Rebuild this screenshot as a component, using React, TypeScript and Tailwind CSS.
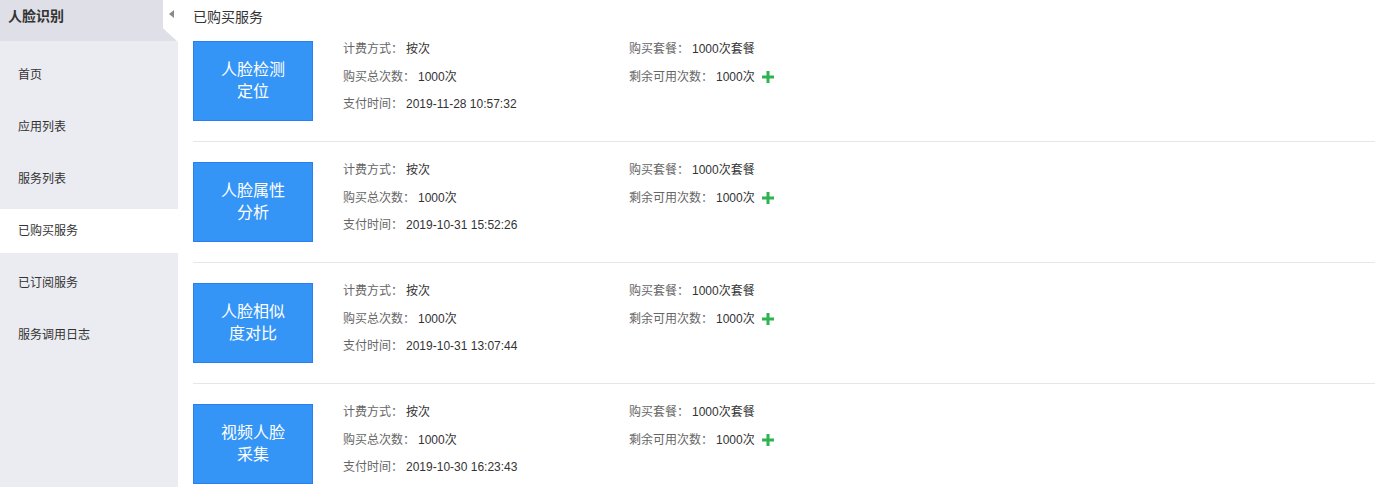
import React from "react";

type Item = {
  name: [string, string];
  time: string;
};

const items: Item[] = [
  { name: ["人脸检测", "定位"], time: "2019-11-28 10:57:32" },
  { name: ["人脸属性", "分析"], time: "2019-10-31 15:52:26" },
  { name: ["人脸相似", "度对比"], time: "2019-10-31 13:07:44" },
  { name: ["视频人脸", "采集"], time: "2019-10-30 16:23:43" },
];

const nav = ["首页", "应用列表", "服务列表", "已购买服务", "已订阅服务", "服务调用日志"];

function Plus() {
  return (
    <svg width="12" height="12" viewBox="0 0 12 12" className="ml-[7px]">
      <rect x="4.5" y="0" width="3" height="12" fill="#2fb350" />
      <rect x="0" y="4.5" width="12" height="3" fill="#2fb350" />
    </svg>
  );
}

function Row({ label, value, plus }: { label: string; value: string; plus?: boolean }) {
  return (
    <div className="flex items-center h-[14px] leading-[14px] text-[12px]">
      <span className="text-[#666]">{label}</span>
      <span className="text-[#333] ml-[3px]">{value}</span>
      {plus && <Plus />}
    </div>
  );
}

export default function App() {
  return (
    <div
      className="flex h-[487px] w-full overflow-hidden bg-white"
      style={{ fontFamily: '"Liberation Sans", "Noto Sans CJK SC", sans-serif' }}
    >
      <aside className="w-[178px] shrink-0 bg-[#ebecf1] flex flex-col">
        <div className="relative h-[41px] bg-[#dfe0e7] pl-[8px] pt-[8px] text-[14px] leading-[16px] font-bold text-[#333]">
          人脸识别
          <div className="absolute right-0 top-0 w-[15px] h-[42px] bg-white [clip-path:polygon(0_0,100%_0,100%_100%,0_67%)]">
            <div className="absolute left-[6px] top-[10px] w-0 h-0 border-t-[4px] border-b-[4px] border-r-[5px] border-t-transparent border-b-transparent border-r-[#8a8a8a]" />
          </div>
        </div>
        <nav className="flex flex-col gap-[8px] pt-[12px]">
          {nav.map((n) => (
            <div
              key={n}
              className={`h-[44px] flex items-center pl-[18px] text-[12px] text-[#333] ${
                n === "已购买服务" ? "bg-white" : ""
              }`}
            >
              {n}
            </div>
          ))}
        </nav>
      </aside>
      <main className="flex-1 pl-[15px]">
        <div className="h-[41px] pt-[9px] text-[14px] leading-[16px] text-[#333]">已购买服务</div>
        <div className="flex flex-col">
          {items.map((it, i) => (
            <div key={i} className="flex py-[20px] first:pt-0 border-b border-[#e6e6e6]">
              <div className="w-[120px] h-[80px] shrink-0 bg-[#3595f6] border border-[#2b7ef0] flex flex-col items-center justify-center text-white text-[16px] leading-[22px]">
                <span>{it.name[0]}</span>
                <span>{it.name[1]}</span>
              </div>
              <div className="ml-[30px] w-[286px] pt-[1px] flex flex-col gap-[13.5px]">
                <Row label="计费方式：" value="按次" />
                <Row label="购买总次数：" value="1000次" />
                <Row label="支付时间：" value={it.time} />
              </div>
              <div className="pt-[1px] flex flex-col gap-[13.5px]">
                <Row label="购买套餐：" value="1000次套餐" />
                <Row label="剩余可用次数：" value="1000次" plus />
              </div>
            </div>
          ))}
        </div>
      </main>
    </div>
  );
}
